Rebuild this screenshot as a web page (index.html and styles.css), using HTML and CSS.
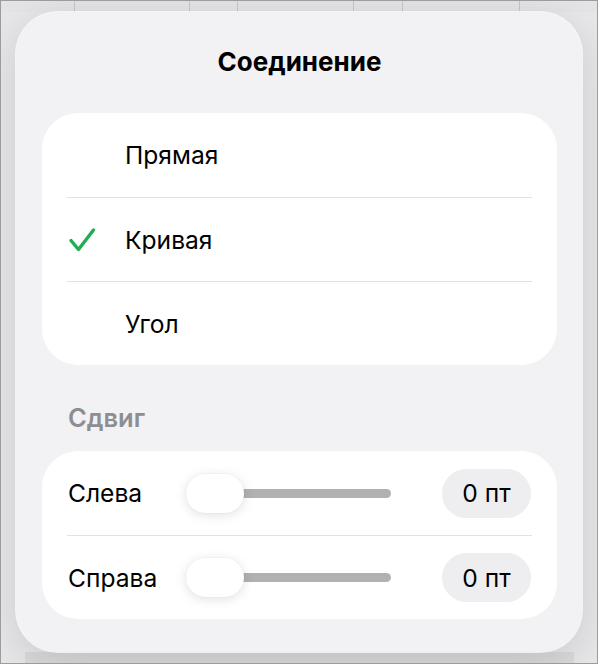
FILE: index.html
```html
<!DOCTYPE html>
<html lang="ru">
<head>
    <meta charset="UTF-8">
    <meta name="viewport" content="width=device-width, initial-scale=1.0">
    <title>Соединение</title>
    <link rel="stylesheet" href="styles.css">
</head>
<body>
    <div class="screen">
        <!-- колонки таблицы за всплывающим окном -->
        <div class="backdrop-cols">
            <span></span><span></span><span></span><span></span><span></span><span></span><span></span>
        </div>

        <div class="popover">
            <h2 class="popover-title">Соединение</h2>

            <ul class="option-list">
                <li class="option">
                    <span class="check"></span>
                    <span>Прямая</span>
                </li>
                <li class="option is-selected">
                    <span class="check">
                        <svg width="28" height="26" viewBox="0 0 28 26">
                            <path d="M3 13.5 L10.5 22.5 L25.5 3" fill="none" stroke="#1fae55" stroke-width="3.4" stroke-linecap="round" stroke-linejoin="round"/>
                        </svg>
                    </span>
                    <span>Кривая</span>
                </li>
                <li class="option">
                    <span class="check"></span>
                    <span>Угол</span>
                </li>
            </ul>

            <h3 class="section-label">Сдвиг</h3>

            <div class="offset-list">
                <div class="offset-row">
                    <span class="offset-name">Слева</span>
                    <div class="slider">
                        <div class="slider-track"></div>
                        <div class="slider-thumb"></div>
                    </div>
                    <span class="offset-value">0 пт</span>
                </div>
                <div class="offset-row">
                    <span class="offset-name">Справа</span>
                    <div class="slider">
                        <div class="slider-track"></div>
                        <div class="slider-thumb"></div>
                    </div>
                    <span class="offset-value">0 пт</span>
                </div>
            </div>
        </div>

        <div class="backdrop-panel"></div>
    </div>
</body>
</html>
```

FILE: styles.css
```css
/* Общие стили */
html, body {
    margin: 0;
    padding: 0;
    background: #fff;
}

body {
    font-family: Inter, "Noto Sans", sans-serif;
    color: #000;
}

.screen {
    width: 598px;
    height: 664px;
    box-sizing: border-box;
    border: 1px solid #9c9c9f;
    background: #e7e7ea;
    display: flex;
    flex-direction: column;
    overflow: hidden;
}

/* Колонки за окном */
.backdrop-cols {
    height: 11px;
    flex: none;
    display: grid;
    grid-template-columns: 74px 115px 48px 116px 49px 117px 1fr;
    background: #e4e4e7;
}

.backdrop-cols span {
    border-right: 1px solid #c6c6ca;
}

.backdrop-cols span:last-child {
    border-right: none;
}

.backdrop-panel {
    flex: 1;
    margin: 0 23px 0 24px;
    background: #dadadd;
}

/* Всплывающее окно */
.popover {
    flex: none;
    height: 640px;
    box-sizing: border-box;
    margin: 0 15px;
    padding: 34px 25px 0 26px;
    background: #f2f2f4;
    border-radius: 42px;
    box-shadow: 0 0 0 1px rgba(255, 255, 255, 0.7), 0 10px 40px rgba(0, 0, 0, 0.13);
    position: relative;
    z-index: 1;
}

.popover-title {
    margin: 0;
    font-size: 26px;
    line-height: 32px;
    font-weight: 700;
    text-align: center;
}

/* Список вариантов */
.option-list {
    list-style: none;
    margin: 35px 0 0;
    padding: 0;
    background: #fff;
    border-radius: 36px;
}

.option {
    display: flex;
    align-items: center;
    height: 84px;
    box-sizing: border-box;
    margin: 0 25px;
    padding-left: 1px;
    font-size: 24.6px;
}

.option + .option {
    border-top: 1px solid #e2e2e4;
}

.check {
    width: 57px;
    display: flex;
    align-items: center;
}

/* Сдвиг */
.section-label {
    margin: 38px 0 18px 26px;
    font-size: 25.5px;
    line-height: 30px;
    font-weight: 600;
    color: #8d8d92;
}

.offset-list {
    background: #fff;
    border-radius: 36px;
}

.offset-row {
    display: flex;
    align-items: center;
    height: 83px;
    margin: 0 25px;
    padding: 0 1px;
    font-size: 24.6px;
}

.offset-row + .offset-row {
    border-top: 1px solid #e2e2e4;
}

.offset-row:first-child {
    height: 84px;
    box-sizing: border-box;
}

.offset-name {
    width: 118px;
}

.slider {
    width: 205px;
    height: 39px;
    position: relative;
    display: flex;
    align-items: center;
}

.slider-track {
    width: 100%;
    height: 9px;
    border-radius: 5px;
    background: #b1b1b3;
}

.slider-thumb {
    position: absolute;
    left: 0;
    top: 0;
    width: 58px;
    height: 39px;
    border-radius: 20px;
    background: #fff;
    box-shadow: 0 2px 12px rgba(0, 0, 0, 0.12), 0 0 2px rgba(0, 0, 0, 0.05);
}

.offset-value {
    margin-left: auto;
    width: 89px;
    height: 49px;
    border-radius: 25px;
    background: #eeeef0;
    display: flex;
    align-items: center;
    justify-content: center;
}
```
